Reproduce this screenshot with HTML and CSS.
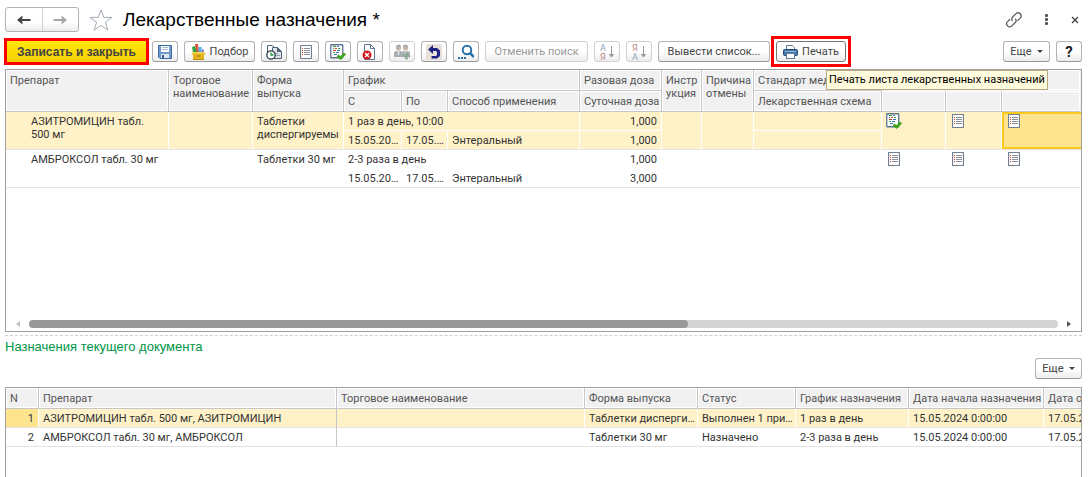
FILE: index.html
```html
<!DOCTYPE html>
<html lang="ru">

<head>
    <meta charset="UTF-8">
    <meta name="viewport" content="width=device-width, initial-scale=1">
    <title>Лекарственные назначения</title>
    <link rel="stylesheet" href="styles.css">
</head>

<body>

    <!-- shared icons -->
    <svg class="sprite" aria-hidden="true">
        <symbol id="icon-list" viewBox="0 0 12 14">
            <rect x="0.5" y="0.5" width="11" height="13" rx="0.5" fill="#fff" stroke="#6f7f8f" stroke-width="1.2" />
            <path d="M2 3.5h1M2 5.5h1M2 7.5h1M2 9.5h1" stroke="#d0431c" />
            <path d="M4 3.5h6M4 5.5h6M4 7.5h6M4 9.5h6" stroke="#8d8d96" />
        </symbol>
        <symbol id="icon-done" viewBox="0 0 16 16">
            <rect x="0.75" y="0.75" width="12" height="13" rx="0.5" fill="#fff" stroke="#5c7590" stroke-width="1.3" />
            <path d="M3 2.5h3M8 4.5h2M3 8.5h2" stroke="#35a02c" />
            <path d="M7 2.5h2M3 4.5h1M7 6.5h3" stroke="#3b74b8" />
            <path d="M5 4.5h2M3 6.5h3" stroke="#d0431c" />
            <path d="M6 8.5h3M4 10.5h3" stroke="#3b74b8" />
            <path d="M7.5 11.5l3 2.5l4.5-4.5" fill="none" stroke="#3fa51d" stroke-width="2.8" />
        </symbol>
    </svg>

    <header class="title-bar">
        <div class="nav-buttons">
            <button type="button" aria-label="Назад">
                <svg width="14" height="10" viewBox="0 0 14 10"><path d="M13.5 5H3" stroke="#444" stroke-width="2" /><path d="M5.5 0.5L0 5l5.5 4.5V7L4 5l1.5-2z" fill="#444" /></svg>
            </button>
            <button type="button" aria-label="Вперед">
                <svg width="14" height="10" viewBox="0 0 14 10"><path d="M0.5 5H11" stroke="#a5a5a5" stroke-width="2" /><path d="M8.5 0.5L14 5l-5.5 4.5V7L10 5l-1.5-2z" fill="#a5a5a5" /></svg>
            </button>
        </div>
        <button type="button" class="plain-btn" aria-label="В избранное">
            <svg width="24" height="22" viewBox="0 0 24 22"><path d="M12 1l2.8 7.4h8.2l-6.6 4.9l2.5 7.9L12 16.4l-6.9 4.8l2.5-7.9L1 8.4h8.2z" fill="#fff" stroke="#a3abb3" /></svg>
        </button>
        <h1>Лекарственные назначения *</h1>
        <div class="window-tools">
            <button type="button" class="plain-btn" aria-label="Ссылка">
                <svg width="18" height="18" viewBox="0 0 18 18" fill="none" stroke="#555" stroke-width="1.2">
                    <path d="M7.5 9.8a3 3 0 0 1 .3-4l3-3a3 3 0 0 1 4.4 4.3l-2.7 2.7" />
                    <path d="M10.3 7.6a3 3 0 0 1-.3 4.2l-3.1 3.1a3 3 0 0 1-4.3-4.3l2.5-2.5" />
                </svg>
            </button>
            <button type="button" class="plain-btn" aria-label="Меню">
                <svg width="4" height="12" viewBox="0 0 4 12" fill="#555"><rect width="3" height="3" rx="1" /><rect y="4" width="3" height="3" rx="1" /><rect y="8" width="3" height="3" rx="1" /></svg>
            </button>
            <button type="button" class="plain-btn" aria-label="Закрыть">
                <svg width="8" height="8" viewBox="0 0 8 8"><path d="M1 1l6 6M7 1l-6 6" stroke="#444" stroke-width="1.4" /></svg>
            </button>
        </div>
    </header>

    <div class="toolbar">
        <button type="button" class="btn btn-primary">Записать и закрыть</button>
        <button type="button" class="btn btn-icon" aria-label="Записать">
            <svg width="16" height="16" viewBox="0 0 16 16">
                <path d="M1.5 1.5h13v13H3l-1.5-1.5z" fill="#6f9ccb" stroke="#3d6c9e" />
                <rect x="4" y="2" width="8" height="6" fill="#fff" />
                <path d="M5 3.5h6M5 5.5h6" stroke="#a9bdd2" />
                <rect x="4" y="10" width="8" height="4" fill="#dfe7ef" />
                <rect x="5" y="11" width="2" height="3" fill="#2f5f93" />
            </svg>
        </button>
        <button type="button" class="btn btn-pick">
            <svg width="15" height="16" viewBox="0 0 15 16">
                <path d="M4 0h3l1 8H5z" fill="#e0523a" />
                <path d="M1 3l3-1l2 7H2z" fill="#2fa33f" />
                <path d="M7.500 3h3v6h-3z" fill="#58aee8" />
                <path d="M11 5l2 1l-1 4h-2z" fill="#7773cf" />
                <path d="M0 10l2-2h11l2 2l-2 1H2z" fill="#f0cb45" />
                <path d="M2 10h11v5.500H2z" fill="#e3b420" />
                <path d="M2 15.500h11" stroke="#b98b0e" />
                <path d="M5.500 12h4" stroke="#a87c08" />
            </svg>
            Подбор
        </button>
        <button type="button" class="btn btn-icon" aria-label="История">
            <svg width="18" height="16" viewBox="0 0 18 16">
                <path d="M2.5 1.5h5l3 3v8h-8z" fill="#fff" stroke="#4d6276" />
                <path d="M7.5 3.5h5l4 4v7h-9z" fill="#dfe5ea" stroke="#4d6276" />
                <path d="M12 3v5h5z" fill="#4d6276" />
                <path d="M9 9.5h4M11 11.5h4" stroke="#8c9ba8" />
                <circle cx="6" cy="11" r="4.2" fill="#fff" stroke="#2c3e4e" stroke-width="1.3" />
                <path d="M6 8.5V11h2.5" fill="none" stroke="#209a3a" stroke-width="1.3" />
            </svg>
        </button>
        <button type="button" class="btn btn-icon" aria-label="Список">
            <svg width="12" height="14"><use href="#icon-list" /></svg>
        </button>
        <button type="button" class="btn btn-icon" aria-label="Выполнить">
            <svg width="16" height="16"><use href="#icon-done" /></svg>
        </button>
        <button type="button" class="btn btn-icon" aria-label="Отменить назначение">
            <svg width="16" height="16" viewBox="0 0 16 16">
                <path d="M2.5 .5h6l4 4v11h-10z" fill="#fff" stroke="#5c7590" />
                <path d="M8.5 .5v4h4" fill="none" stroke="#5c7590" />
                <circle cx="5" cy="11" r="4.5" fill="#d0161b" />
                <path d="M3 9l4 4M7 9l-4 4" stroke="#fff" stroke-width="1.5" />
            </svg>
        </button>
        <button type="button" class="btn btn-icon" aria-label="Пациенты" disabled>
            <svg width="17" height="16" viewBox="0 0 17 16">
                <circle cx="4.5" cy="4" r="2.6" fill="#c9b8aa" />
                <circle cx="11.5" cy="4" r="2.6" fill="#c9b8aa" />
                <path d="M2 3q0-2.5 2.5-2.5T7 3zM9 3q0-2.5 2.5-2.5T14 3z" fill="#aaa" />
                <path d="M0 13V9q0-2 2.5-2h4q2 0 2 2v4zM8 13V9q0-2 2-2h3.5Q16 7 16 9v4z" fill="#a5adb5" />
                <path d="M4.5 7v4M11.5 7v3" stroke="#e6e6e6" stroke-width="1.5" />
                <path d="M12.5 8.5v7M9 12h7" stroke="#8fab98" stroke-width="2.6" />
            </svg>
        </button>
        <button type="button" class="btn btn-icon" aria-label="Вернуть">
            <svg width="16" height="16" viewBox="0 0 16 16">
                <rect width="16" height="16" fill="#e9e0d8" />
                <path d="M2 5.5L7 1v3h4l3 2.500V12l-3 2.500H5.500V12H10l1-1V8l-1-1H7v3z" fill="#1f2384" />
            </svg>
        </button>
        <button type="button" class="btn btn-icon" aria-label="Найти">
            <svg width="16" height="16" viewBox="0 0 16 16">
                <circle cx="9" cy="6" r="4.3" fill="#fff" stroke="#2672aa" stroke-width="2" />
                <path d="M12 9l4 4" stroke="#2672aa" stroke-width="2.5" />
                <path d="M0 14h2M3 14h2M6 14h2" stroke="#2672aa" stroke-width="2" />
            </svg>
        </button>
        <button type="button" class="btn btn-cancel" disabled>Отменить поиск</button>
        <button type="button" class="btn btn-icon" aria-label="По возрастанию" disabled>
            <svg class="sort-icon" width="16" height="18" viewBox="0 0 16 18">
                <text x="1" y="8" fill="#8fa3b8">А</text><text x="1" y="17" fill="#b98b8b">Я</text>
                <path d="M12.5 3v10M10.5 11.5l2 2.5l2-2.5z" fill="#999" stroke="#999" />
            </svg>
        </button>
        <button type="button" class="btn btn-icon" aria-label="По убыванию" disabled>
            <svg class="sort-icon" width="16" height="18" viewBox="0 0 16 18">
                <text x="1" y="8" fill="#b98b8b">Я</text><text x="1" y="17" fill="#8fa3b8">А</text>
                <path d="M12.5 3v10M10.5 11.5l2 2.5l2-2.5z" fill="#999" stroke="#999" />
            </svg>
        </button>
        <button type="button" class="btn btn-output">Вывести список...</button>
        <div class="print-wrap">
            <button type="button" class="btn btn-print" aria-describedby="printTip">
                <svg width="15" height="14" viewBox="0 0 15 14">
                    <path d="M3.5 4.5v-4h6l2 2v2" fill="#fff" stroke="#5f7c98" />
                    <rect x="0.5" y="4.5" width="14" height="6" rx="1" fill="#4878a6" stroke="#254f7a" />
                    <path d="M2 6.5h11" stroke="#8db0d0" />
                    <rect x="3.5" y="8.5" width="8" height="5" fill="#fff" stroke="#5f7c98" />
                </svg>
                Печать
            </button>
            <div class="tooltip" id="printTip" role="tooltip">Печать листа лекарственных назначений</div>
        </div>
        <button type="button" class="btn btn-more push-right">Еще <span class="caret"></span></button>
        <button type="button" class="btn btn-icon btn-help" aria-label="Справка">?</button>
    </div>

    <main>
        <section class="grid-box grid-top">
            <table class="grid">
                <colgroup>
                    <col class="w-drug"><col class="w-trade"><col class="w-form"><col class="w-from"><col class="w-to">
                    <col class="w-method"><col class="w-dose"><col class="w-instr"><col class="w-reason">
                    <col class="w-scheme"><col class="w-mark"><col class="w-mark2"><col>
                </colgroup>
                <thead>
                    <tr>
                        <th rowspan="2">Препарат</th>
                        <th rowspan="2">Торговое наименование</th>
                        <th rowspan="2">Форма<br>выпуска</th>
                        <th colspan="3">График</th>
                        <th class="line">Разовая доза</th>
                        <th rowspan="2">Инстр<br>укция</th>
                        <th rowspan="2">Причина отмены</th>
                        <th class="line">Стандарт мед</th>
                        <th colspan="3" class="last"></th>
                    </tr>
                    <tr>
                        <th>С</th>
                        <th>По</th>
                        <th>Способ применения</th>
                        <th class="line">Суточная доза</th>
                        <th class="line">Лекарственная схема</th>
                        <th></th>
                        <th></th>
                        <th class="last"></th>
                    </tr>
                </thead>
                <tbody class="selected">
                    <tr>
                        <td rowspan="2" class="indent">АЗИТРОМИЦИН табл. 500 мг</td>
                        <td rowspan="2"></td>
                        <td rowspan="2">Таблетки диспергируемы</td>
                        <td colspan="3" class="line">1 раз в день, 10:00</td>
                        <td class="num">1,000</td>
                        <td rowspan="2"></td>
                        <td rowspan="2"></td>
                        <td></td>
                        <td rowspan="2" class="mark mark-done"><svg width="16" height="16"><use href="#icon-done" /></svg></td>
                        <td rowspan="2" class="mark"><svg width="12" height="14"><use href="#icon-list" /></svg></td>
                        <td rowspan="2" class="mark current"><svg width="12" height="14"><use href="#icon-list" /></svg></td>
                    </tr>
                    <tr>
                        <td class="line">15.05.2024</td>
                        <td class="line">17.05.2024</td>
                        <td class="line">Энтеральный</td>
                        <td class="num">1,000</td>
                        <td></td>
                    </tr>
                </tbody>
                <tbody>
                    <tr>
                        <td rowspan="2" class="indent">АМБРОКСОЛ табл. 30 мг</td>
                        <td rowspan="2"></td>
                        <td rowspan="2">Таблетки 30 мг</td>
                        <td colspan="3" class="line">2-3 раза в день</td>
                        <td class="num">1,000</td>
                        <td rowspan="2"></td>
                        <td rowspan="2"></td>
                        <td></td>
                        <td rowspan="2" class="mark"><svg width="12" height="14"><use href="#icon-list" /></svg></td>
                        <td rowspan="2" class="mark"><svg width="12" height="14"><use href="#icon-list" /></svg></td>
                        <td rowspan="2" class="mark"><svg width="12" height="14"><use href="#icon-list" /></svg></td>
                    </tr>
                    <tr>
                        <td class="line">15.05.2024</td>
                        <td class="line">17.05.2024</td>
                        <td class="line">Энтеральный</td>
                        <td class="num">3,000</td>
                        <td></td>
                    </tr>
                </tbody>
            </table>
            <div class="scrollbar">
                <span class="arrow arrow-left"></span>
                <div class="track"><div class="thumb"></div></div>
                <span class="arrow arrow-right"></span>
            </div>
        </section>

        <section class="current-doc">
            <h2>Назначения текущего документа</h2>
            <div class="sub-toolbar">
                <button type="button" class="btn btn-more">Еще <span class="caret"></span></button>
            </div>
            <div class="grid-box grid-bottom">
                <table class="grid grid-wide">
                    <colgroup>
                        <col class="w-n"><col class="w-drug2"><col class="w-trade2"><col class="w-form2">
                        <col class="w-status"><col class="w-plan"><col class="w-start"><col>
                    </colgroup>
                    <thead>
                        <tr>
                            <th>N</th>
                            <th>Препарат</th>
                            <th>Торговое наименование</th>
                            <th>Форма выпуска</th>
                            <th>Статус</th>
                            <th class="line">График назначения</th>
                            <th class="line">Дата начала назначения</th>
                            <th class="line">Дата окончания</th>
                        </tr>
                    </thead>
                    <tbody class="selected">
                        <tr>
                            <td class="num row-no">1</td>
                            <td class="line ruled">АЗИТРОМИЦИН табл. 500 мг, АЗИТРОМИЦИН</td>
                            <td></td>
                            <td class="line">Таблетки диспергируемые</td>
                            <td class="line">Выполнен 1 прием</td>
                            <td class="line">1 раз в день</td>
                            <td class="line">15.05.2024 0:00:00</td>
                            <td class="line">17.05.2024 0:00:00</td>
                        </tr>
                    </tbody>
                    <tbody>
                        <tr>
                            <td class="num">2</td>
                            <td class="line ruled">АМБРОКСОЛ табл. 30 мг, АМБРОКСОЛ</td>
                            <td></td>
                            <td class="line">Таблетки 30 мг</td>
                            <td class="line">Назначено</td>
                            <td class="line">2-3 раза в день</td>
                            <td class="line">15.05.2024 0:00:00</td>
                            <td class="line">17.05.2024 0:00:00</td>
                        </tr>
                    </tbody>
                </table>
            </div>
        </section>
    </main>

</body>

</html>
```
FILE: styles.css
```css
* {
    box-sizing: border-box;
}

body {
    margin: 0;
    padding: 7px 6px 0 5px;
    height: 100vh;
    display: flex;
    flex-direction: column;
    overflow: hidden;
    background-color: #fff;
    color: #333;
    font-family: Roboto, "Liberation Sans", sans-serif;
    font-size: 11px;
}

button {
    font: inherit;
    color: inherit;
    cursor: pointer;
}

svg {
    display: block;
    flex: none;
}

.sprite {
    position: absolute;
    width: 0;
    height: 0;
}

/* title */
.title-bar {
    display: flex;
    align-items: center;
    height: 25px;
}

.nav-buttons {
    display: flex;
    width: 74px;
    height: 25px;
    margin-right: 10px;
    border: 1px solid #b3b3b3;
    border-radius: 3px;
    background: linear-gradient(#fff 60%, #ededed);
}

.nav-buttons button {
    flex: 1;
    display: flex;
    align-items: center;
    justify-content: center;
    padding: 0;
    border: none;
    background: none;
}

.nav-buttons button + button {
    border-left: 1px solid #d0d0d0;
}

.plain-btn {
    padding: 0;
    border: none;
    background: none;
}

.title-bar h1 {
    margin: 0 0 0 10px;
    font-family: "Liberation Sans", Arial, sans-serif;
    font-size: 19px;
    font-weight: normal;
    color: #000;
}

.window-tools {
    display: flex;
    align-items: center;
    gap: 22px;
    margin-left: auto;
    padding-right: 3px;
}

/* toolbar */
.toolbar {
    display: flex;
    gap: 6px;
    margin-top: 9px;
    padding-left: 2px;
}

.btn {
    display: flex;
    align-items: center;
    justify-content: center;
    gap: 4px;
    height: 21px;
    padding: 0;
    border: 1px solid #b3b3b3;
    border-bottom-color: #999;
    border-radius: 3px;
    background: linear-gradient(#fff 50%, #ececec);
    color: #444;
    white-space: nowrap;
}

.btn:disabled {
    border-color: #d0d0d0;
    color: #999;
}

.btn-icon {
    width: 26px;
}

.btn-primary {
    width: 139px;
    border: none;
    border-radius: 0;
    background: linear-gradient(#ffe60a, #f7d000);
    box-shadow: 0 0 0 3px #f00;
    font-family: "Liberation Sans", Arial, sans-serif;
    font-size: 12px;
    font-weight: bold;
}

.btn-pick {
    width: 71px;
}

.btn-cancel {
    width: 103px;
}

.btn-output {
    width: 112px;
}

.btn-print {
    width: 70px;
    border-color: #777;
}

.btn-more {
    width: 47px;
    gap: 5px;
}

.btn-help {
    font-size: 15px;
    font-weight: bold;
    color: #222;
}

.push-right {
    margin-left: auto;
}

.caret {
    border: 3px solid transparent;
    border-top-color: #444;
    border-bottom: none;
}

.sort-icon {
    font-size: 9px;
}

.print-wrap {
    position: relative;
    outline: 3px solid #f00;
    outline-offset: 2px;
}

.tooltip {
    position: absolute;
    top: 29px;
    left: 50px;
    z-index: 1;
    padding: 0 2px;
    border: 1px solid #b5ad82;
    background-color: #fffbdc;
    color: #000;
    line-height: 18px;
    white-space: nowrap;
}

/* grids */
main {
    flex: 1;
    display: flex;
    flex-direction: column;
    min-height: 0;
    margin-top: 7px;
}

.grid-box {
    border: 1px solid #a0a0a0;
    overflow: hidden;
}

.grid-top {
    display: flex;
    flex-direction: column;
    min-height: 263px;
}

.grid {
    width: 100%;
    table-layout: fixed;
    border-collapse: separate;
    border-spacing: 0;
}

.grid-wide {
    width: 1140px;
}

.grid th,
.grid td {
    height: 19px;
    padding: 3px 4px 2px;
    border-bottom: 1px solid transparent;
    border-right: 1px solid transparent;
    line-height: 13px;
    text-align: left;
    vertical-align: top;
    overflow: hidden;
}

.grid th {
    height: 21px;
    padding: 4px 1px 2px 4px;
    border-color: #c6c6c6;
    background-color: #f1f1f1;
    box-shadow: inset 0 0 0 1px #fff;
    color: #555;
    font-weight: normal;
}

.grid .last {
    border-right-color: transparent;
}

.grid thead tr:first-child .last {
    border-bottom-color: #f1f1f1;
}

.grid .line {
    padding-right: 1px;
    white-space: nowrap;
    text-overflow: ellipsis;
}

.grid td.num {
    text-align: right;
}

.grid td.indent {
    padding-left: 25px;
}

.grid tbody tr:last-child td,
.grid tbody td[rowspan] {
    border-bottom-color: #e3e3e3;
}

.grid .selected td {
    border-right-color: #fff;
    background-color: #fff2c8;
    background-clip: padding-box;
}

.grid .selected tr:not(:last-child) td:not([rowspan]) {
    border-bottom-color: #fff;
}

.grid .selected td.row-no {
    background-color: #ffe48f;
}

.grid tbody td.ruled {
    border-right-color: #c6c6c6;
}

.grid td.mark {
    padding: 2px 6px;
}

.grid td.mark-done {
    padding: 1px 4px;
}

.grid .selected td.current {
    background-color: #ffe48f;
    border-right: none;
    box-shadow: inset 2px 0 #fbc81e, inset 0 2px #fbc81e, inset 0 -2px #fbc81e;
}

.w-drug { width: 163px; }
.w-trade { width: 84px; }
.w-form { width: 91px; }
.w-from { width: 58px; }
.w-to { width: 46px; }
.w-method { width: 132px; }
.w-dose { width: 82px; }
.w-instr { width: 40px; }
.w-reason { width: 52px; }
.w-scheme { width: 128px; }
.w-mark { width: 64px; }
.w-mark2 { width: 56px; }

.w-n { width: 33px; }
.w-drug2 { width: 298px; }
.w-trade2 { width: 248px; }
.w-form2 { width: 113px; }
.w-status { width: 98px; }
.w-plan { width: 113px; }
.w-start { width: 135px; }

.scrollbar {
    display: flex;
    align-items: center;
    gap: 9px;
    height: 15px;
    margin-top: auto;
    padding: 0 10px;
}

.track {
    flex: 1;
    height: 8px;
    border-radius: 4px;
    background-color: #d4d4d4;
}

.thumb {
    width: 64%;
    height: 8px;
    border-radius: 4px;
    background-color: #999;
}

.arrow {
    border: 3px solid transparent;
}

.arrow-left {
    border-left: none;
    border-right: 4px solid #c0c0c0;
}

.arrow-right {
    border-right: none;
    border-left: 4px solid #555;
}

/* current document */
.current-doc {
    flex: 1;
    display: flex;
    flex-direction: column;
    margin-top: 3px;
    border-top: 1px dashed #d0d0d0;
}

.current-doc h2 {
    margin: 3px 0 0;
    color: #009646;
    font-family: "Liberation Sans", Arial, sans-serif;
    font-size: 13px;
    font-weight: normal;
    line-height: 16px;
}

.sub-toolbar {
    display: flex;
    justify-content: flex-end;
    margin: 3px 0 8px;
}

.grid-bottom {
    flex: 1;
    border-bottom: none;
}
```
